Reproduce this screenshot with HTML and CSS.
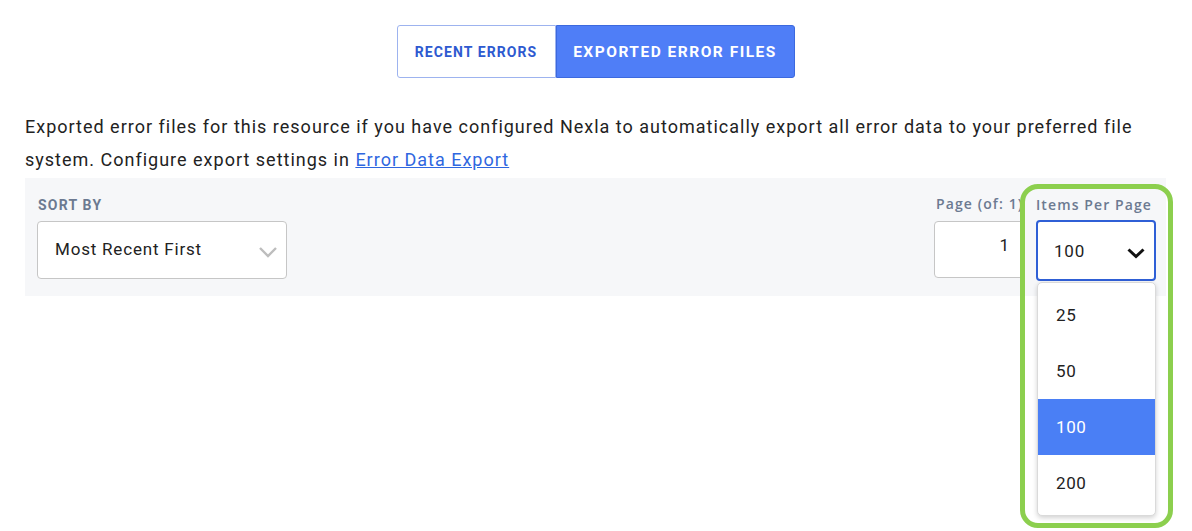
FILE: index.html
```html
<!DOCTYPE html>
<html>
<head>
<meta charset="utf-8">
<link rel="stylesheet" href="styles.css">
</head>
<body>
<div class="page">
  <div class="tabs">
    <button class="tab">RECENT ERRORS</button>
    <button class="tab active">EXPORTED ERROR FILES</button>
  </div>
  <p class="desc">Exported error files for this resource if you have configured Nexla to automatically export all error data to your preferred file system. Configure export settings in <a href="#" class="link">Error Data Export</a></p>
  <div class="panel">
    <div class="field sort">
      <div class="label caps">SORT BY</div>
      <div class="select">
        <span>Most Recent First</span>
        <svg class="chev" width="20" height="12" viewBox="0 0 20 12"><path d="M2 2 L10 10 L18 2" fill="none" stroke="#bdbdbd" stroke-width="2.4"/></svg>
      </div>
    </div>
    <div class="spacer"></div>
    <div class="field pagef">
      <div class="label">Page (of: 1)</div>
      <div class="input">1</div>
    </div>
    <div class="field items">
      <div class="label">Items Per Page</div>
      <div class="select focus">
        <span>100</span>
        <svg class="chev" width="20" height="12" viewBox="0 0 20 12"><path d="M2.5 2.5 L10 9.5 L17.5 2.5" fill="none" stroke="#111" stroke-width="3"/></svg>
      </div>
      <ul class="menu">
        <li>25</li>
        <li>50</li>
        <li class="sel">100</li>
        <li>200</li>
      </ul>
      <div class="highlight"></div>
    </div>
  </div>
</div>
</body>
</html>
```
FILE: styles.css
```css
html, body {
  margin: 0;
  padding: 0;
  background: #fff;
  font-family: Roboto, "Liberation Sans", sans-serif;
  color: #222;
  min-height: 531px;
}
.page {
  padding: 25px 26px 0 25px;
  width: 1141px;
  min-height: 531px;
}
.tabs {
  display: flex;
  justify-content: center;
}
.tab {
  font-family: Roboto, "Liberation Sans", sans-serif;
  font-weight: 700;
  font-size: 14px;
  letter-spacing: 1.1px;
  height: 53px;
  padding: 0;
  border: 1px solid #9db3ef;
  background: #fff;
  color: #2e5ad0;
  border-radius: 3px 0 0 3px;
  width: 159px;
}
.tab.active {
  background: #4f7ef7;
  border-color: #3c69de;
  color: #fff;
  border-radius: 0 3px 3px 0;
  width: 239px;
  font-size: 15.5px;
  letter-spacing: 1.5px;
}
.desc {
  margin: 32px 0 2px 0;
  font-size: 18px;
  letter-spacing: 1px;
  line-height: 33px;
  color: #222;
}
.link {
  color: #2f67e0;
  text-decoration: underline;
}
.panel {
  background: #f6f7f9;
  height: 118px;
  display: flex;
  align-items: flex-start;
  padding: 0 10px 0 12px;
  box-sizing: border-box;
}
.field {
  display: flex;
  flex-direction: column;
}
.label {
  font-family: "Open Sans", "Noto Sans", sans-serif;
  font-weight: 600;
  font-size: 14px;
  letter-spacing: 1.1px;
  color: #6c7a91;
  height: 20px;
  line-height: 20px;
  margin-top: 17px;
  margin-bottom: 6px;
  white-space: nowrap;
}
.label.caps {
  font-family: Roboto, "Liberation Sans", sans-serif;
  font-weight: 700;
  font-size: 14px;
  letter-spacing: 1.2px;
  margin-left: 1px;
}
.select {
  box-sizing: border-box;
  height: 58px;
  border: 1px solid #c6c6c6;
  border-radius: 4px;
  background: #fff;
  display: flex;
  align-items: center;
  justify-content: space-between;
  font-size: 17px;
  color: #222;
  letter-spacing: 0.8px;
}
.sort .select {
  width: 250px;
  padding: 0 8px 0 17px;
}
.sort .select span {
  margin-top: -3px;
}
.sort .chev {
  margin-top: 3px;
}
.spacer {
  flex: 1;
}
.pagef {
  width: 87px;
  overflow: hidden;
  margin-right: 15px;
}
.pagef .label {
  margin-top: 16px;
  margin-left: 2px;
}
.input {
  box-sizing: border-box;
  width: 100px;
  height: 57px;
  margin-top: 1px;
  border: 1px solid #c6c6c6;
  border-radius: 4px;
  background: #fff;
  font-size: 17px;
  text-align: right;
  padding: 13px 24px 0 0;
}
.items {
  position: relative;
  width: 120px;
}
.items .select {
  width: 120px;
  height: 61px;
  border: 2px solid #2f5fd6;
  padding: 0 8px 0 16px;
  margin-top: -1px;
}
.items .chev {
  margin-top: 4px;
}
.menu {
  list-style: none;
  position: absolute;
  left: 1px;
  top: 104px;
  margin: 0;
  padding: 4px 0;
  width: 119px;
  box-sizing: border-box;
  border: 1px solid #dadada;
  border-radius: 5px;
  background: #fff;
  box-shadow: 0 2px 5px rgba(0,0,0,0.18);
  z-index: 2;
}
.menu li {
  height: 56px;
  line-height: 56px;
  padding-left: 18px;
  font-size: 17px;
  color: #222;
  letter-spacing: 0.6px;
}
.menu li.sel {
  background: #4a7ff5;
  color: #fff;
}
.highlight {
  position: absolute;
  left: -16px;
  top: 6px;
  width: 153px;
  height: 344px;
  box-sizing: border-box;
  border: 5px solid #8ccf4e;
  border-radius: 18px;
  z-index: 3;
  pointer-events: none;
}
```
